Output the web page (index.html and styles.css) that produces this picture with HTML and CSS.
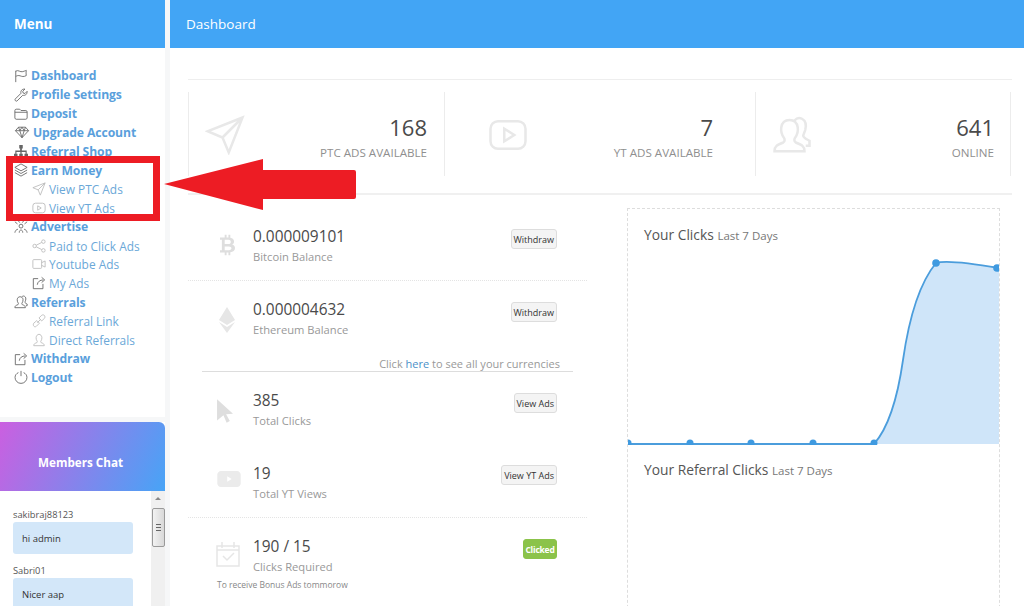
FILE: index.html
```html
<!DOCTYPE html>
<html lang="en">
<head>
<meta charset="utf-8">
<title>Dashboard</title>
<link rel="stylesheet" href="styles.css">
</head>
<body>
<svg class="defs" width="0" height="0" aria-hidden="true">
  <symbol id="i-flag" viewBox="0 0 16 16"><path d="M2 15V2M2 2.500c3-2 5 1.500 8 .5 2-.6 3-1 4-1.500-.3 2-.3 4 0 6-3 1.800-5 1-7 .3-2-.6-3.500-.3-5 .7"/></symbol>
  <symbol id="i-wrench" viewBox="0 0 16 16"><path d="M1.500 12.500 8 6c-.8-2.500 1-5 4.500-4.800L10 3.800l.5 2 2 .5 2.500-2.500c.2 3.500-2.500 5.300-5 4.500l-6.500 6.500c-1 .9-3.200-.8-2-2.300z"/></symbol>
  <symbol id="i-folder" viewBox="0 0 16 16"><path d="M2.500 2.500h4l1.500 1.500h5.500c.8 0 1.500.6 1.500 1.500v7c0 .8-.7 1.500-1.500 1.500h-11C1.700 14 1 13.300 1 12.500V4c0-.9.700-1.500 1.500-1.500zM1 6h14"/></symbol>
  <symbol id="i-diamond" viewBox="0 0 16 16"><path d="M4 2.500h8l3.500 4L8 14.500.5 6.500zM.5 6.500h15M5.500 6.500 8 14.500l2.500-8M4 2.500l1.500 4L8 2.500l2.500 4 1.500-4"/></symbol>
  <symbol id="i-sitemap" viewBox="0 0 16 16"><path class="solid" d="M6 1h4v4H9v2.500h5.500V11H16v4h-4v-4h1.200V9H8.700v2H10v4H6v-4h1.300V9H2.800v2H4v4H0v-4h1.500V7.500H7V5H6z"/></symbol>
  <symbol id="i-layers" viewBox="0 0 16 16"><path d="M8 1l7 4-7 4-7-4zM1 8l7 4 7-4M1 11l7 4 7-4"/></symbol>
  <symbol id="i-plane" viewBox="0 0 16 16"><path d="M15 1 1 6.500l6 2.500 2.500 6zM15 1 7 9"/></symbol>
  <symbol id="i-play" viewBox="0 0 16 16"><rect x="1" y="2.500" width="14" height="11" rx="3"/><path d="M6.500 5.500v5l4-2.500z"/></symbol>
  <symbol id="i-share" viewBox="0 0 16 16"><circle cx="3" cy="8" r="2"/><circle cx="13" cy="3" r="2"/><circle cx="13" cy="13" r="2"/><path d="M5 7l6-3M5 9l6 3"/></symbol>
  <symbol id="i-cam" viewBox="0 0 16 16"><rect x="1" y="3" width="10" height="10" rx="1"/><path d="M11 6.500l4-2v7l-4-2"/></symbol>
  <symbol id="i-export" viewBox="0 0 16 16"><path d="M7 3H1.500v11.500h11V9M6 10c.500-3.500 3-5.500 7-5.500M11 1.500l3.500 3-3.500 3"/></symbol>
  <symbol id="i-users" viewBox="0 0 16 16"><path d="M1 14.500c0-2 1-2.500 3.500-3.500.8-.5.600-1.500.2-2C4 8 3.500 6.500 3.700 5c.3-2 1.600-3 3.300-3s3 1 3.300 3c.2 1.500-.3 3-1 4-.4.500-.6 1.500.2 2 2.500 1 3.500 1.500 3.500 3.500zM9 2.200C10 1 11 1 12 1.500c1.500.8 1.800 2.500 1.300 4.500-.3 1-.7 1.500-.8 2.300 0 .8 1 1.200 2.500 2v2h-1.500"/></symbol>
  <symbol id="i-burst" viewBox="0 0 16 16"><circle cx="8" cy="7" r="2.200"/><path d="M1 2l3 2.500M15 2l-3 2.500M1 14.500c.5-2.500 1.500-3.500 3.500-4M15 14.500c-.5-2.500-1.500-3.500-3.500-4M6 14.500c0-2 .8-3 2-3s2 1 2 3M5 1l1.500 2M11 1 9.500 3"/></symbol>
  <symbol id="i-user" viewBox="0 0 16 16"><path d="M2 14.500c0-2 1-2.500 3.500-3.500.8-.5.600-1.500.2-2C5 8 4.500 6.500 4.700 5c.3-2 1.600-3.500 3.300-3.500S11 3 11.300 5c.2 1.500-.3 3-1 4-.4.500-.6 1.500.2 2 2.500 1 3.500 1.500 3.500 3.500z"/></symbol>
  <symbol id="i-link" viewBox="0 0 16 16"><path d="M2 10.500l3.500-3 3 3-3.500 3.500c-1 .8-2 .8-2.800 0s-1-2.500-.2-3.500zM8 4.500l3-3c1-.8 2.500-.6 3.200.2s.8 2.300 0 3.300l-3.200 3-3-3.500zM6 10l4-4"/></symbol>
  <symbol id="i-power" viewBox="0 0 16 16"><path d="M8 1v6M5 3C2.700 4 1.200 6 1.200 8.500a6.800 6.800 0 0 0 13.600 0c0-2.500-1.500-4.500-3.800-5.500"/></symbol>
  <symbol id="i-btc" viewBox="0 0 16 22"><path class="solid" fill-rule="evenodd" d="M5 0h2v3h2V0h2v3.200c2.500.5 4 2 4 4 0 1.500-.8 2.800-2 3.300 1.800.5 3 1.900 3 3.800 0 2.600-2 4.200-5 4.500V22H9v-3H7v3H5v-3H0v-2.500h2V5.500H0V3h5zm0 5.500V10h4c1.600 0 2.500-.8 2.500-2.200S10.600 5.500 9 5.500zm0 7V16.500h4.500c1.700 0 2.700-.8 2.700-2s-1-2-2.700-2z"/></symbol>
  <symbol id="i-eth" viewBox="0 0 16 26"><path class="solid" d="M8 0l8 13-8 5-8-5zM0 15l8 5 8-5-8 11z"/></symbol>
  <symbol id="i-cursor" viewBox="0 0 16 22"><path class="solid" d="M1 0l15 13.500-6.500.5 3.500 6.500-3 1.500-3-7L1 20z"/></symbol>
  <symbol id="i-ytf" viewBox="0 0 26 20"><path class="solid" fill-rule="evenodd" d="M4 1h18c2 0 4 2 4 4v10c0 2-2 4-4 4H4c-2 0-4-2-4-4V5c0-2 2-4 4-4zm7 6v6l5-3z"/></symbol>
  <symbol id="i-cal" viewBox="0 0 24 26"><path d="M1 5h22v20H1zM6 1v6M18 1v6M7 15l4 4 7-7M1 9h22"/></symbol>
</svg>

<div class="app">
  <aside class="sidebar">
    <div class="bar bar-menu">Menu</div>
    <nav class="nav">
      <a class="item"><svg class="ic"><use href="#i-flag"/></svg>Dashboard</a>
      <a class="item"><svg class="ic"><use href="#i-wrench"/></svg>Profile Settings</a>
      <a class="item"><svg class="ic"><use href="#i-folder"/></svg>Deposit</a>
      <a class="item"><svg class="ic ic-wide"><use href="#i-diamond"/></svg>Upgrade Account</a>
      <a class="item"><svg class="ic"><use href="#i-sitemap"/></svg>Referral Shop</a>
      <a class="item"><svg class="ic"><use href="#i-layers"/></svg>Earn Money</a>
      <a class="sub"><svg class="ic"><use href="#i-plane"/></svg>View PTC Ads</a>
      <a class="sub"><svg class="ic"><use href="#i-play"/></svg>View YT Ads</a>
      <a class="item"><svg class="ic"><use href="#i-burst"/></svg>Advertise</a>
      <a class="sub"><svg class="ic"><use href="#i-share"/></svg>Paid to Click Ads</a>
      <a class="sub"><svg class="ic"><use href="#i-cam"/></svg>Youtube Ads</a>
      <a class="sub"><svg class="ic ic-dark"><use href="#i-export"/></svg>My Ads</a>
      <a class="item"><svg class="ic"><use href="#i-users"/></svg>Referrals</a>
      <a class="sub"><svg class="ic"><use href="#i-link"/></svg>Referral Link</a>
      <a class="sub"><svg class="ic"><use href="#i-user"/></svg>Direct Referrals</a>
      <a class="item"><svg class="ic"><use href="#i-export"/></svg>Withdraw</a>
      <a class="item"><svg class="ic"><use href="#i-power"/></svg>Logout</a>
    </nav>
    <section class="chat">
      <h2 class="chat-head">Members Chat</h2>
      <div class="chat-body">
        <div class="messages">
          <div class="msg-user">sakibraj88123</div>
          <div class="bubble">hi admin</div>
          <div class="msg-user">Sabri01</div>
          <div class="bubble">Nicer aap</div>
        </div>
        <div class="scrollbar">
          <span class="scroll-up"></span>
          <span class="scroll-thumb"></span>
        </div>
      </div>
    </section>
  </aside>

  <main class="main">
    <div class="bar bar-title">Dashboard</div>
    <div class="content">
      <section class="stats">
        <div class="stat">
          <svg class="stat-ic"><use href="#i-plane"/></svg>
          <div class="stat-text"><div class="stat-num">168</div><div class="stat-label">PTC ADS AVAILABLE</div></div>
        </div>
        <div class="stat stat-mid">
          <svg class="stat-ic"><use href="#i-play"/></svg>
          <div class="stat-text"><div class="stat-num">7</div><div class="stat-label">YT ADS AVAILABLE</div></div>
        </div>
        <div class="stat stat-last">
          <svg class="stat-ic"><use href="#i-users"/></svg>
          <div class="stat-text"><div class="stat-num">641</div><div class="stat-label">ONLINE</div></div>
        </div>
      </section>

      <div class="columns">
        <section class="list">
          <div class="row row-btc">
            <svg class="row-ic ic-btc"><use href="#i-btc"/></svg>
            <div class="row-text"><div class="row-num">0.000009101</div><div class="row-label">Bitcoin Balance</div></div>
            <button class="btn">Withdraw</button>
          </div>
          <div class="row row-eth">
            <svg class="row-ic ic-eth"><use href="#i-eth"/></svg>
            <div class="row-text"><div class="row-num">0.000004632</div><div class="row-label">Ethereum Balance</div></div>
            <button class="btn">Withdraw</button>
          </div>
          <p class="more">Click <a>here</a> to see all your currencies</p>
          <div class="row row-clicks">
            <svg class="row-ic ic-cursor"><use href="#i-cursor"/></svg>
            <div class="row-text"><div class="row-num">385</div><div class="row-label">Total Clicks</div></div>
            <button class="btn">View Ads</button>
          </div>
          <div class="row row-views">
            <svg class="row-ic ic-yt"><use href="#i-ytf"/></svg>
            <div class="row-text"><div class="row-num">19</div><div class="row-label">Total YT Views</div></div>
            <button class="btn">View YT Ads</button>
          </div>
          <div class="row row-req">
            <svg class="row-ic ic-cal"><use href="#i-cal"/></svg>
            <div class="row-text"><div class="row-num">190 / 15</div><div class="row-label">Clicks Required</div></div>
            <button class="btn btn-green">Clicked</button>
          </div>
          <p class="note">To receive Bonus Ads tommorow</p>
        </section>

        <section class="charts">
          <h3 class="chart-title">Your Clicks <small>Last 7 Days</small></h3>
          <svg class="chart" viewBox="0 0 371 187" aria-label="Clicks chart">
            <path class="area" d="M246 186C262 168 270 137 275 102C280 67 290 27 308 5C317 2 342 5 371 10V186Z"/>
            <path class="line" d="M0 186H246C262 168 270 137 275 102C280 67 290 27 308 5C317 2 342 5 371 10"/>
            <g class="dots">
              <circle cx="0" cy="185" r="3.500"/><circle cx="62" cy="185" r="3.500"/><circle cx="123" cy="185" r="3.500"/><circle cx="185" cy="185" r="3.500"/><circle cx="246" cy="185" r="3.500"/><circle cx="308" cy="5" r="3.800"/><circle cx="369" cy="10" r="3.800"/>
            </g>
          </svg>
          <h3 class="chart-title chart-title-2">Your Referral Clicks <small>Last 7 Days</small></h3>
        </section>
      </div>
    </div>
  </main>
</div>

<div class="callout-box"></div>
<svg class="callout-arrow" viewBox="0 0 194 54" aria-hidden="true"><path d="M0 27 99 2V13H190q2 0 2 2V40q0 2-2 2H99V53z"/></svg>
</body>
</html>
```
FILE: styles.css
```css
* { box-sizing: border-box; }
html, body { margin: 0; height: 606px; overflow: hidden; }
body { font-family: "Open Sans", "Noto Sans", sans-serif; background: #f6f7f8; color: #4a4a4a; position: relative; }
.defs { position: absolute; }
svg use { fill: none; stroke: currentColor; }
.solid { fill: currentColor; stroke: none; }

.app { display: grid; grid-template-columns: 165px 854px; column-gap: 5px; height: 606px; }
.bar { flex: none; height: 48px; background: #42a5f5; color: #fff; display: flex; align-items: center; font-size: 13.500px; padding-bottom: 1px; }
.bar-menu { font-weight: 700; padding-left: 14px; }
.bar-title { padding-left: 16px; }

.sidebar { display: flex; flex-direction: column; height: 606px; overflow: hidden; }
.nav { flex: none; background: #fff; height: 369px; padding: 18.500px 0 0 14px; }
.item, .sub { display: flex; align-items: center; height: 18.850px; font-size: 12.200px; white-space: nowrap; }
.item { font-weight: 700; color: #5a9fdc; letter-spacing: -.1px; }
.sub { padding-left: 18px; color: #6ba8d8; font-size: 11.900px; }
.ic { width: 14px; height: 14px; margin-right: 3px; flex: none; color: #666; stroke-width: 1; }
.ic-wide { width: 16px; margin-right: 3px; }
.sub .ic { color: #bbb; }
.sub .ic-dark { color: #666; }

.chat { margin-top: 5px; flex: 1; display: flex; flex-direction: column; background: #fff; }
.chat-head { flex: none; margin: 0; height: 69px; padding: 10px 0 0 38px; display: flex; align-items: center; font-size: 11.700px; font-weight: 700; color: #fff; background: linear-gradient(115deg, #cb5fe0, #47a4f6); border-top-right-radius: 6px; }
.chat-body { flex: 1; display: flex; overflow: hidden; }
.messages { flex: 1; padding: 18px 0 0 13px; }
.msg-user { font-size: 9.300px; line-height: 12px; color: #555; margin-bottom: 1px; }
.bubble { width: 120px; height: 32px; margin-bottom: 11px; padding-left: 9px; display: flex; align-items: center; background: #d3e7f9; border-radius: 3px; font-size: 9.500px; color: #333; }
.scrollbar { width: 14px; background: #f0f0f0; position: relative; padding-top: 17px; }
.scroll-up { position: absolute; top: 6px; left: 4px; border: 3px solid transparent; border-top: 0; border-bottom-color: #888; }
.scroll-thumb { display: flex; align-items: center; justify-content: center; width: 13px; height: 39px; margin-left: 1px; background: linear-gradient(90deg, #f2f2f2, #d8d8d8); border: 1px solid #999; border-radius: 2px; }
.scroll-thumb::after { content: ""; width: 5px; height: 7px; background: repeating-linear-gradient(180deg, #666 0 1px, transparent 1px 3px); }

.main { background: #fff; height: 606px; overflow: hidden; }
.content { padding: 31px 13px 0 18px; }
.stats { display: grid; grid-template-columns: 256px 311px 256px; width: 824px; height: 116px; border-top: 1px solid #eee; border-bottom: 2px solid #f0f0f0; padding: 12px 0 17px; }
.stat { display: flex; align-items: center; justify-content: space-between; border-left: 1px solid #ececec; padding: 0 17px 0 16px; }
.stat-mid { padding-left: 43px; padding-right: 42px; }
.stat-last { border-right: 1px solid #ececec; padding-right: 16px; }
.stat-ic { width: 40px; height: 40px; margin-top: 2px; color: #e8e8e8; stroke-width: 1; }
.stat-text { text-align: right; margin-top: 4px; }
.stat-num { font-size: 22px; line-height: 30px; color: #4a4a4a; }
.stat-label { font-size: 11.600px; line-height: 16px; color: #8f8f8f; margin-top: 3px; }

.columns { display: flex; }
.list { width: 399px; }
.row { position: relative; display: flex; align-items: flex-start; padding-left: 30px; }
.row-ic { position: absolute; color: #dedede; }
.row-text { flex: 1; padding-left: 35px; }
.row-num { font-size: 15.400px; line-height: 20px; color: #4a4a4a; margin-top: 1px; }
.row-label { font-size: 11.200px; line-height: 20px; color: #999; }
.row .btn { margin-top: 3px; }
.row-btc { height: 86px; padding-top: 31px; border-bottom: 1px dotted #e4e4e4; }
.row-eth { height: 66px; padding-top: 18px; }
.more { margin: 0 14px; height: 25px; padding: 10px 13px 0 0; font-size: 11px; line-height: 14px; text-align: right; color: #999; border-bottom: 1px solid #ddd; width: 371px; }
.more a { color: #4a90c8; }
.row-clicks { height: 72px; padding-top: 18px; }
.row-views { height: 73px; padding-top: 19px; }
.row-views .btn { margin-top: 2px; }
.row-req { height: 62px; padding-top: 18px; border-top: 1px dotted #e4e4e4; }
.btn { flex: none; margin: 0 30px 0 0; height: 20px; padding: 0 2px; font: 9px "Open Sans", sans-serif; color: #333; background: #f4f4f4; border: 1px solid #ddd; border-radius: 3px; }
.btn-green { width: 34px; padding: 0; background: #8bc34a; border-color: #8bc34a; color: #fff; font-weight: 700; font-size: 8.500px; letter-spacing: -.2px; }
.ic-btc { left: 32px; top: 39px; width: 15px; height: 22px; }
.ic-eth { left: 31px; top: 26px; width: 16px; height: 26px; color: #e6e6e6; }
.ic-cursor { left: 28px; top: 26px; width: 17px; height: 26px; }
.ic-yt { left: 28px; top: 26px; width: 26px; height: 18px; color: #ebebeb; }
.ic-cal { left: 28px; top: 23px; width: 24px; height: 26px; color: #e6e6e6; stroke-width: 1.500; }
.note { margin: 0 0 0 29px; font-size: 8.500px; line-height: 12px; color: #888; }

.charts { margin: 13px 0 0 40px; width: 373px; height: 420px; border: 1px dashed #ddd; border-bottom: 0; }
.chart-title { margin: 0; padding: 16px 0 0 16px; height: 49px; font-size: 13.800px; font-weight: 400; line-height: 20px; color: #555; }
.chart-title small { font-size: 11.500px; color: #777; }
.chart { display: block; width: 371px; height: 187px; overflow: hidden; }
.area { fill: #cfe5f9; }
.line { fill: none; stroke: #4b9ddc; stroke-width: 1.800; }
.dots { fill: #3f9ae0; }
.chart-title-2 { padding-top: 15px; }

.callout-box { position: absolute; left: 6px; top: 156px; width: 154px; height: 65px; border: 7px solid #ed1c24; }
.callout-arrow { position: absolute; left: 164px; top: 157px; width: 194px; height: 54px; fill: #ed1c24; }
```
